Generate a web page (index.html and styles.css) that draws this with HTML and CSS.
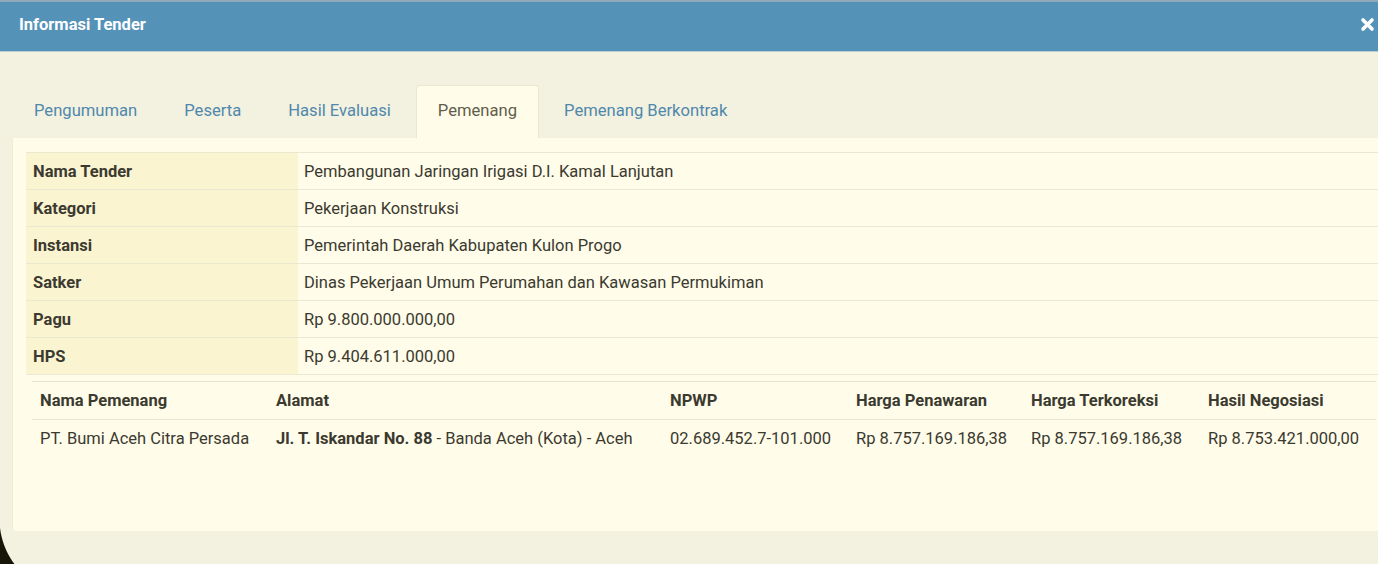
FILE: index.html
```html
<!DOCTYPE html>
<html lang="id">
<head>
  <meta charset="UTF-8">
  <meta name="viewport" content="width=device-width, initial-scale=1">
  <title>Informasi Tender</title>
  <link rel="stylesheet" href="styles.css">
</head>
<body>

  <div class="modal">
    <div class="modal-header">
      <h1>Informasi Tender</h1>
      <button class="close" type="button" aria-label="Tutup">
        <svg width="15" height="15" viewBox="0 0 15 15">
          <path d="M3 3 L12 12 M12 3 L3 12" stroke="#fff" stroke-width="3.6" stroke-linecap="round"/>
        </svg>
      </button>
    </div>

    <div class="modal-body">
      <!-- tab navigasi -->
      <ul class="tabs">
        <li><a href="#pengumuman">Pengumuman</a></li>
        <li><a href="#peserta">Peserta</a></li>
        <li><a href="#evaluasi">Hasil Evaluasi</a></li>
        <li class="active"><a href="#pemenang">Pemenang</a></li>
        <li><a href="#kontrak">Pemenang Berkontrak</a></li>
      </ul>

      <div class="tab-panel" id="pemenang">
        <table class="info">
          <tr><th>Nama Tender</th><td>Pembangunan Jaringan Irigasi D.I. Kamal Lanjutan</td></tr>
          <tr><th>Kategori</th><td>Pekerjaan Konstruksi</td></tr>
          <tr><th>Instansi</th><td>Pemerintah Daerah Kabupaten Kulon Progo</td></tr>
          <tr><th>Satker</th><td>Dinas Pekerjaan Umum Perumahan dan Kawasan Permukiman</td></tr>
          <tr><th>Pagu</th><td>Rp 9.800.000.000,00</td></tr>
          <tr><th>HPS</th><td>Rp 9.404.611.000,00</td></tr>
        </table>

        <table class="winner">
          <thead>
            <tr>
              <th class="c-nama">Nama Pemenang</th>
              <th class="c-alamat">Alamat</th>
              <th class="c-npwp">NPWP</th>
              <th class="c-harga">Harga Penawaran</th>
              <th class="c-koreksi">Harga Terkoreksi</th>
              <th>Hasil Negosiasi</th>
            </tr>
          </thead>
          <tbody>
            <tr>
              <td>PT. Bumi Aceh Citra Persada</td>
              <td><b>Jl. T. Iskandar No. 88</b> - Banda Aceh (Kota) - Aceh</td>
              <td>02.689.452.7-101.000</td>
              <td>Rp 8.757.169.186,38</td>
              <td>Rp 8.757.169.186,38</td>
              <td>Rp 8.753.421.000,00</td>
            </tr>
          </tbody>
        </table>
      </div>
    </div>
  </div>

  <div class="screen-corner"></div>

</body>
</html>
```

FILE: styles.css
```css
/* umum */
html, body {
  height: 100%;
}
body {
  margin: 0;
  font-family: Roboto, 'Liberation Sans', sans-serif;
  background: #f3f1df;
  color: #3b3a30;
  overflow: hidden;
}

/* header modal */
.modal-header {
  display: flex;
  align-items: center;
  justify-content: space-between;
  height: 49px;
  background: #5592b8;
  border-top: 2px solid #8fa9b8;
  border-bottom: 1px solid #b8cdd6;
}
.modal-header h1 {
  margin: 0 0 4px 19px;
  font-size: 16.5px;
  font-weight: bold;
  color: #fff;
}
.close {
  background: none;
  border: none;
  padding: 0;
  margin: 0 3px 4px 0;
  width: 15px;
  height: 15px;
  cursor: pointer;
}
.close svg {
  display: block;
}

/* tab */
.modal-body {
  padding-top: 33px;
}
.tabs {
  display: flex;
  list-style: none;
  margin: 0 0 0 12px;
  padding: 0;
}
.tabs li {
  margin-right: 3px;
}
.tabs a {
  display: block;
  height: 53px;
  line-height: 52px;
  padding: 0 22px;
  font-size: 16.6px;
  color: #4f88ad;
  text-decoration: none;
  border-radius: 4px 4px 0 0;
}
.tabs li.active a {
  background: #fffce9;
  color: #5f5c4c;
  border: 1px solid #ebe8d2;
  border-bottom: none;
  height: 52px;
  line-height: 50px;
  padding: 0 21px;
}

.tab-panel {
  margin-left: 12px;
  height: 379px;
  padding: 14px 0 0 13px;
  background: #fffce9;
  border-left: 1px solid #efecd8;
  border-bottom-left-radius: 4px;
}

/* tabel informasi */
.info {
  width: 100%;
  border-collapse: collapse;
  font-size: 16.5px;
}
.info th, .info td {
  height: 36px;
  padding: 0 0 0 7px;
  border-top: 1px solid #ebe8d2;
  border-bottom: 1px solid #ebe8d2;
  text-align: left;
}
.info th {
  width: 265px;
  background: #fbf4d1;
  font-weight: bold;
}
.info td {
  padding-left: 6px;
}

/* tabel pemenang */
.winner {
  margin: 6px 0 0 6px;
  width: 1344px;
  border-collapse: collapse;
  font-size: 16.5px;
}
.winner th, .winner td {
  padding: 0 8px;
  text-align: left;
  white-space: nowrap;
}
.winner th {
  height: 37px;
  border-top: 1px solid #e8e5cf;
  border-bottom: 1px solid #e8e5cf;
  font-weight: bold;
}
.winner td {
  height: 36px;
}
.c-nama { width: 220px; }
.c-alamat { width: 378px; }
.c-npwp { width: 170px; }
.c-harga { width: 159px; }
.c-koreksi { width: 161px; }

/* sudut layar ponsel */
.screen-corner {
  position: absolute;
  left: 0;
  bottom: 0;
  width: 40px;
  height: 40px;
  background: radial-gradient(circle at 75px -5px, transparent 75px, #171507 76px);
}
```
